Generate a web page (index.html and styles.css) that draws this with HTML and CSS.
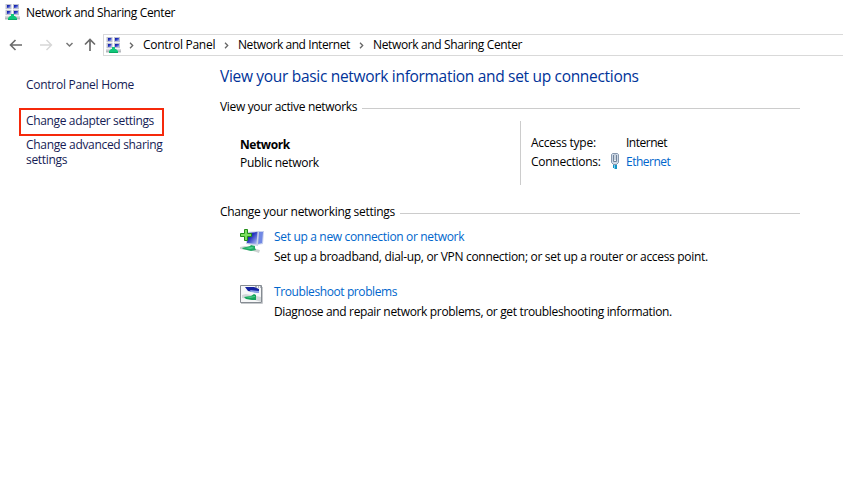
FILE: index.html
```
<!DOCTYPE html>
<html lang="en">
<head>
<meta charset="utf-8">
<title>Network and Sharing Center</title>
<link rel="stylesheet" href="styles.css">
</head>
<body>
<svg class="defs" width="0" height="0" aria-hidden="true">
  <defs>
    <linearGradient id="screen" x1="0" y1="0" x2="1" y2="1"><stop offset="0" stop-color="#0716a0"/><stop offset=".4" stop-color="#2634bd"/><stop offset="1" stop-color="#b9c8fa"/></linearGradient>
    <symbol id="net" viewBox="0 0 16 17">
      <path d="M.5 0h6v5.300h-6zM8 0h6v5.300H8zM.5 6h6v5.300h-6zM8 6h6v5.300H8z" fill="#bfc2cf"/>
      <g fill="url(#screen)"><path d="M2 1h3.500v3H2z"/><path d="M9 1h4v3H9z"/><path d="M2 7h3.500v3H2z"/><path d="M9 7h4v3H9z"/></g>
      <path d="M0 12.500h15v3H0z" fill="#b5b8bd"/><path d="M0 12.500h15v1H0z" fill="#d6d8dc"/>
      <path d="M6 10h3v2h1l2 2v2H3v-2l2-2h1z" fill="#0fc77a"/><path d="M3 15h9v1H3z" fill="#08a862"/>
    </symbol>
  </defs>
</svg>
<header class="titlebar"><svg class="net"><use href="#net"/></svg><span>Network and Sharing Center</span></header>
<nav class="navbar">
  <svg class="arrows" viewBox="0 0 103 22" fill="none">
    <path d="M22 11H11M15.500 6L10.500 11l5 5" stroke="#6b6b6b" stroke-width="1.600"/>
    <path d="M40 11h11M46.500 6l5 5-5 5" stroke="#d6d6d6" stroke-width="1.400"/>
    <path d="M66.500 9l3 3 3-3" stroke="#777" stroke-width="1.500"/>
    <path d="M90 17V6M85 10.500l5-5 5 5" stroke="#6b6b6b" stroke-width="1.700"/>
  </svg>
  <div class="address">
    <svg class="net"><use href="#net"/></svg>
    <svg class="chev" viewBox="0 0 5 7"><path d="M1 .8l2.700 2.700L1 6.200"/></svg>
    <span class="c1">Control Panel</span>
    <svg class="chev" viewBox="0 0 5 7"><path d="M1 .8l2.700 2.700L1 6.200"/></svg>
    <span class="c2">Network and Internet</span>
    <svg class="chev" viewBox="0 0 5 7"><path d="M1 .8l2.700 2.700L1 6.200"/></svg>
    <span class="c3">Network and Sharing Center</span>
  </div>
</nav>
<div class="layout">
  <aside class="side">
    <a class="home">Control Panel Home</a>
    <a class="adapter">Change adapter settings</a>
    <a class="advanced">Change advanced sharing<br>settings</a>
  </aside>
  <main>
    <h1>View your basic network information and set up connections</h1>
    <h2><span class="active">View your active networks</span></h2>
    <section class="network">
      <div class="identity"><b>Network</b><span>Public network</span></div>
      <dl>
        <dt class="access">Access type:</dt><dd></dd><dd class="internet">Internet</dd>
        <dt class="conns">Connections:</dt>
        <dd><svg class="plug" viewBox="0 0 10 16">
          <path d="M3 11h1v4H3zM5 11h2v5H5z" fill="#1593c7"/><path d="M4 12h1v4H4z" fill="#80cfe8"/>
          <path d="M2.500.5h5l1 1v8l-2 2h-3l-2-2v-8z" fill="#cdd8e6" stroke="#8798ae"/>
          <path d="M3.500 2v6.500h3V2" fill="#eef2f7" stroke="#71849b"/><path d="M5 1v6" stroke="#a5b3c3"/>
        </svg></dd>
        <dd><a class="ethernet">Ethernet</a></dd>
      </dl>
    </section>
    <h2 class="second"><span class="change">Change your networking settings</span></h2>
    <section class="task">
      <svg viewBox="0 0 24 24">
        <path d="M16 2l8 0-1 13-6 1z" fill="#c6d0ee"/><path d="M18 3l5 0-1 11-4 1z" fill="#7188e4"/>
        <path d="M6 3l13-1-1 15-12-2z" fill="#ccd4e8"/><path d="M8 4l9.500-1-1 12L7 14z" fill="url(#screen)"/>
        <path d="M0 18l5-1 15 4-1 3-6-2-13-2z" fill="#cdd2d2"/>
        <path d="M2 19l8-2 1-1 4 1v2l1 2-5 1-4-1-4-1z" fill="#20aa63"/><path d="M5 19l7-1 2 1-4 1z" fill="#50d690"/>
        <path d="M4.500.500h3v4h4v3h-4v4h-3v-4h-4v-3h4z" fill="#7cdf5c" stroke="#238d19"/>
      </svg>
      <div><a class="setup">Set up a new connection or network</a><p class="setup-text">Set up a broadband, dial-up, or VPN connection; or set up a router or access point.</p></div>
    </section>
    <section class="task trouble">
      <svg viewBox="0 0 24 24">
        <path d="M.5 1.500h21v17H.5z" fill="#f6f7f8" stroke="#858b92"/><path d="M1 19.500h21.500V3" fill="none" stroke="#c6c9cc"/>
        <path d="M15 3h2M18 3h1M20 3h1" stroke="#66717e"/>
        <path d="M5 3h9l5 2v4L8 7z" fill="#1522a0"/><path d="M10 6l9 1v2l-8-1z" fill="#8ea4e6"/>
        <path d="M2 11l4-1 15 3v5l-6-2-13-2z" fill="#d2d7d9"/>
        <path d="M4 13l7-1 3-2 2 1v5l-4 0-6-1z" fill="#15a35a"/><path d="M6 13l9-1v1l-5 1z" fill="#4dcc83"/>
      </svg>
      <div><a class="problems">Troubleshoot problems</a><p class="problems-text">Diagnose and repair network problems, or get troubleshooting information.</p></div>
    </section>
  </main>
</div>
</body>
</html>
```
FILE: styles.css
```
* { box-sizing: border-box; }
body { margin: 0; width: 843px; height: 504px; overflow: hidden; background: #fff; color: #000; font: 12px/16px "Open Sans", "Noto Sans", sans-serif; letter-spacing: -.3px; white-space: nowrap; }
svg { display: block; flex: none; }
.defs { position: absolute; }
h1, h2, p, dl, dd { margin: 0; font-weight: 400; }
.net { width: 16px; height: 17px; }
.titlebar { display: flex; gap: 5px; padding: 4px 0 0 5px; height: 34px; letter-spacing: -.36px; }
.titlebar span { padding-top: 1px; }
.navbar { display: flex; height: 22px; }
.arrows { width: 103px; height: 22px; }
.address { flex: 1; display: flex; align-items: center; border: 1px solid #d9d9d9; border-right: 0; padding-left: 2px; }
.chev { width: 5px; height: 7px; margin-left: 8px; }
.address .net + .chev { margin-left: 7px; }
.chev path { fill: none; stroke: #666; stroke-width: 1.300; }
.address span { margin-left: 9px; }
.c1 { width: 73px; letter-spacing: -.27px; }
.c2 { width: 113px; letter-spacing: -.43px; }
.c3 { letter-spacing: -.36px; }
.layout { display: flex; }
.side { width: 220px; padding: 21px 0 0 19px; color: #151c55; display: flex; flex-direction: column; align-items: flex-start; }
.home { margin-left: 7px; letter-spacing: -.26px; }
.adapter { width: 145px; height: 28px; margin-top: 15px; padding: 3px 5px; border: 2px solid #f5290b; letter-spacing: -.35px; }
.advanced { margin: 1px 0 0 7px; line-height: 15px; letter-spacing: -.32px; }
main { width: 580px; padding-top: 9px; }
h1 { font-size: 15.5px; line-height: 22px; color: #003399; letter-spacing: -.31px; }
h2 { display: flex; align-items: center; gap: 5px; font-size: 12px; line-height: 16px; margin-top: 12px; }
h2::after { content: ""; flex: 1; height: 1px; background: #ccc; margin-top: 2px; }
.active { letter-spacing: -.33px; }
.network { display: flex; height: 64px; margin-top: 6px; }
.identity { width: 301px; padding: 15px 0 0 20px; border-right: 1px solid #ccc; display: flex; flex-direction: column; line-height: 18px; }
.identity b { letter-spacing: -.4px; }
dl { display: grid; grid-template-columns: 79px 16px auto; grid-template-rows: 19px 19px; padding: 13px 0 0 10px; line-height: 18px; }
.access, .conns { letter-spacing: -.26px; }
.internet, .ethernet { letter-spacing: -.5px; }
.plug { width: 10px; height: 16px; }
.ethernet, .task a { color: #0066cc; }
.second { margin-top: 19px; }
.task { display: flex; gap: 10px; padding: 9px 0 0 20px; height: 55px; }
.task a { display: block; }
.task p { margin-top: 4px; }
.task > svg { width: 24px; height: 24px; }
.change { letter-spacing: -.28px; }
.setup { letter-spacing: -.33px; }
.setup-text { letter-spacing: -.315px; }
.problems { letter-spacing: -.4px; }
.problems-text { letter-spacing: -.345px; }
```
